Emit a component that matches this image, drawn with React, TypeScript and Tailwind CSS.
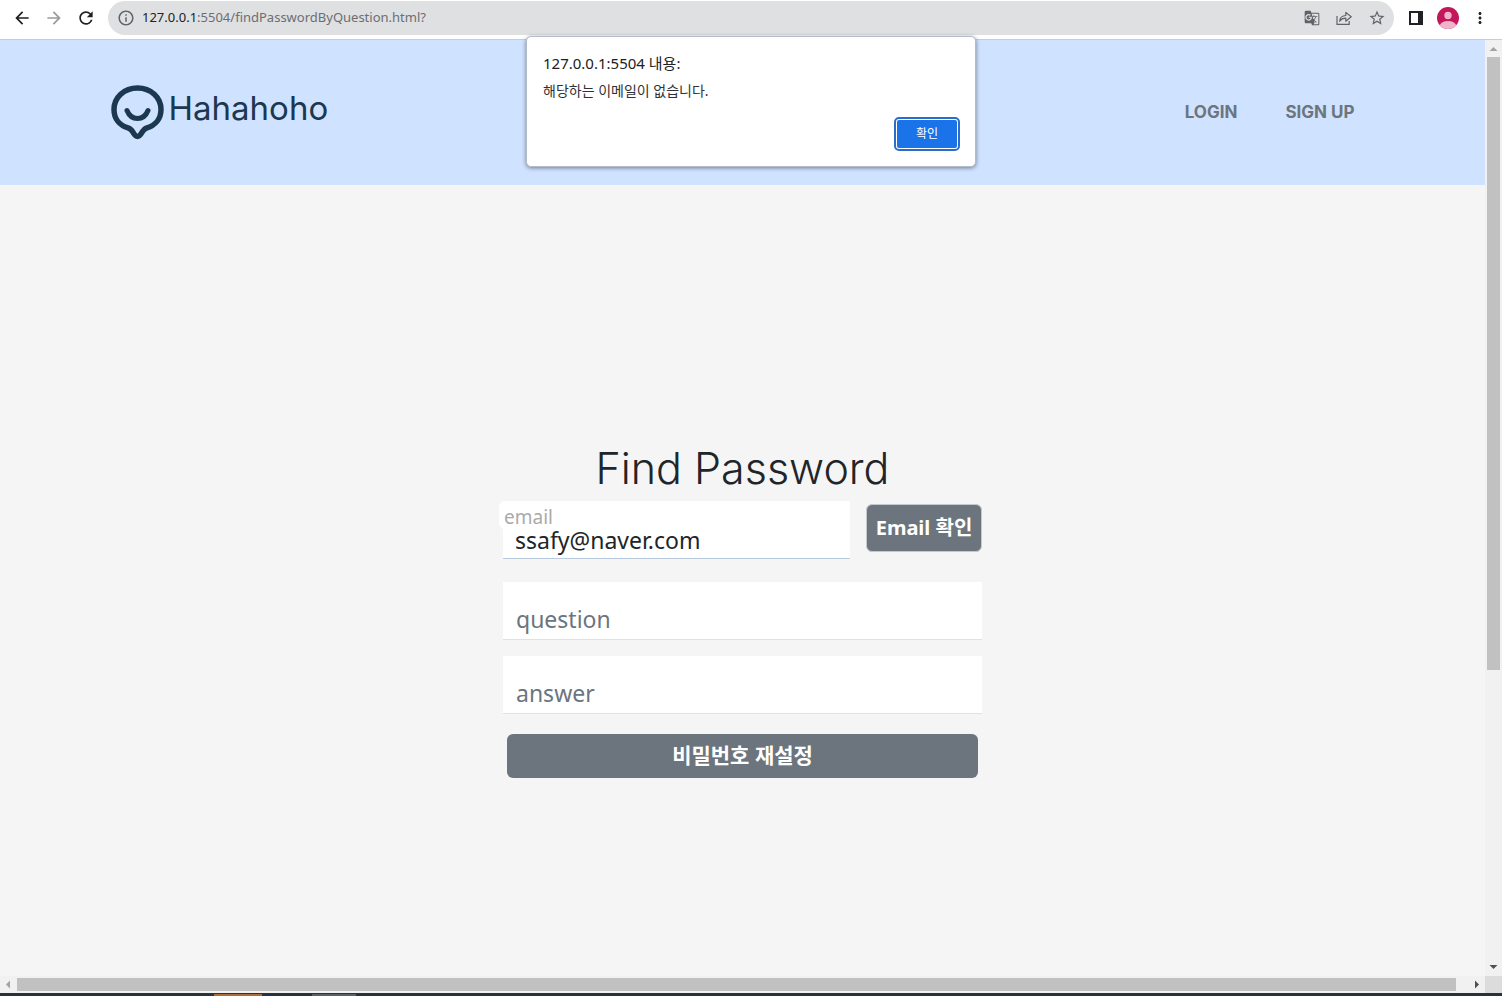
import { useState } from "react";
import {
  MdArrowBack,
  MdArrowForward,
  MdGTranslate,
  MdInfoOutline,
  MdMoreVert,
  MdRefresh,
  MdStarBorder,
} from "react-icons/md";

const ui = "font-['Noto_Sans','Noto_Sans_CJK_KR',sans-serif]";

function BrowserBar() {
  return (
    <div className="flex h-10 shrink-0 items-start border-b border-[#c9cdd3] bg-white pr-[13px] pl-3">
      <div className="flex h-9 items-center gap-3 text-[#1f2023]">
        <button type="button" aria-label="Back"><MdArrowBack size={20} /></button>
        <button type="button" aria-label="Forward" className="text-[#9a9a9c]"><MdArrowForward size={20} /></button>
        <button type="button" aria-label="Reload"><MdRefresh size={20} /></button>
      </div>
      <div className="mt-px ml-3 flex h-[34px] flex-1 items-center rounded-full bg-[#dfe0e2] px-2 text-[#5f6368]">
        <MdInfoOutline size={18} className="ml-px" />
        <p className="ml-[7px] flex-1 text-[13px] text-[#6b6e72]">
          <span className="text-[#202124]">127.0.0.1</span>:5504/findPasswordByQuestion.html?
        </p>
        <div className="flex items-center gap-4">
          <button type="button" aria-label="Translate this page"><MdGTranslate size={16} /></button>
          <button type="button" aria-label="Share">
            <svg width="16" height="16" viewBox="0 0 16 16" fill="none" stroke="currentColor" strokeWidth="1.2">
              <path d="M1 6v8.4h12.2V11" />
              <path d="M3.6 11.2C4 7.6 6.400 5.600 9.800 5.500V2.400L15.200 6.800 9.800 11.200V8.200C7 8.200 5.200 9 3.600 11.200Z" strokeLinejoin="round" />
            </svg>
          </button>
          <button type="button" aria-label="Bookmark"><MdStarBorder size={18} /></button>
        </div>
      </div>
      <div className="ml-[11px] flex h-9 items-center gap-3">
        <button type="button" aria-label="Side panel" className="ml-0.5">
          <svg width="18" height="18" viewBox="0 0 18 18">
            <path fill="#202124" fillRule="evenodd" d="M2 2h14v14H2zM4 4v10h7V4z" />
          </svg>
        </button>
        <button type="button" aria-label="Profile">
          <svg width="22" height="22" viewBox="0 0 22 22">
            <defs><clipPath id="avatar"><circle cx="11" cy="11" r="11" /></clipPath></defs>
            <g clipPath="url(#avatar)">
              <path fill="#c2185b" d="M0 0h22v22H0z" />
              <circle cx="11" cy="8.500" r="3.700" fill="#eeb4ca" />
              <ellipse cx="11" cy="19" rx="8.200" ry="5" fill="#eeb4ca" />
            </g>
          </svg>
        </button>
        <button type="button" aria-label="Menu" className="text-[#202124]"><MdMoreVert size={18} /></button>
      </div>
    </div>
  );
}

function AlertDialog() {
  return (
    <div
      role="alertdialog"
      aria-labelledby="alert-title"
      aria-describedby="alert-text"
      className="absolute top-9 left-1/2 flex w-[450px] -translate-x-1/2 flex-col rounded-[5px] border border-[#b4bccb] bg-white pt-4 pr-[15px] pb-[15px] pl-4 shadow-[0_1px_4px_rgba(0,0,0,0.45)]"
    >
      <h2 id="alert-title" className="text-[15px] leading-5 text-[#202124]">127.0.0.1:5504 내용:</h2>
      <p id="alert-text" className="mt-1.5 text-sm leading-6 text-[#303134]">해당하는 이메일이 없습니다.</p>
      <button
        type="button"
        className="mt-3.5 flex h-[34px] w-[66px] items-center justify-center self-end rounded-[5px] border-2 border-[#2b6dca] bg-white p-px text-xs text-white"
      >
        <span className="flex h-full w-full items-center justify-center rounded-[2px] bg-[#1a73e8]">확인</span>
      </button>
    </div>
  );
}

function Logo() {
  return (
    <a href="#home" className="flex items-start gap-1 text-[#1c3850]">
      <svg width="54" height="56" viewBox="0 0 54 56" fill="none" stroke="currentColor" strokeLinecap="round" strokeLinejoin="round">
        <path strokeWidth="5.500" d="M26.500 3C13 3 3 12.500 3 24.500c0 9.500 5.800 16 14 18.300 2.800.9 3.600 2.200 4.900 4.400 1.300 2.300 2.500 4.300 4.600 4.300s3.300-2 4.600-4.300c1.300-2.200 2.100-3.500 4.900-4.400 8-2.300 14-8.800 14-18.300C50 12.500 40 3 26.500 3Z" />
        <path strokeWidth="5" d="M16 25.500c2 5 6 8 10.500 8s8.500-3 10.500-8" />
      </svg>
      <span className="font-['Inter',sans-serif] text-[33px] leading-[46px]">Hahahoho</span>
    </a>
  );
}

function SiteHeader() {
  return (
    <header className="bg-[#cfe2ff]">
      <div className="mx-auto flex h-[145px] max-w-[1320px] items-center justify-between pr-12 pl-7">
        <Logo />
        <nav className="flex gap-12 pb-0.5 font-['Inter',sans-serif] text-[17px] leading-6 font-bold text-[#6c757d]">
          <a href="#login">LOGIN</a>
          <a href="#signup">SIGN UP</a>
        </nav>
      </div>
    </header>
  );
}

const field =
  "block h-[58px] w-full border-b border-[#dee2e6] bg-white px-[13px] pt-4 text-[23px] text-[#212529] outline-none placeholder:text-[#6c757d]";

function FindPasswordForm() {
  const [email, setEmail] = useState("ssafy@naver.com");
  return (
    <form className="mx-auto w-full max-w-[479px]" onSubmit={(e) => e.preventDefault()}>
      <h1 className="text-center font-['Inter',sans-serif] text-[43px] leading-[48px] font-light text-[#212529]">
        Find Password
      </h1>
      <div className="mt-[9px] flex items-start gap-4">
        <div className="relative flex-1">
          <input
            id="email"
            type="text"
            value={email}
            onChange={(e) => setEmail(e.target.value)}
            className="block h-[58px] w-full border-b border-[#b9cbe0] bg-white px-3 pt-5 text-[23px] text-[#212529] outline-none"
          />
          <label htmlFor="email" className="absolute top-0 -left-1 h-7 rounded-md bg-white px-[5px] text-[19px] leading-8 text-[#aaaaaa]">
            email
          </label>
        </div>
        <button type="button" className="mt-[3px] h-12 w-[116px] rounded-md border border-[#c5cace] bg-[#6c757d] text-xl font-bold whitespace-nowrap text-white">
          Email 확인
        </button>
      </div>
      <input aria-label="question" placeholder="question" className={field + " mt-[23px]"} />
      <input aria-label="answer" placeholder="answer" className={field + " mt-4"} />
      <div className="mt-5 px-1">
        <button type="submit" className="h-11 w-full rounded-md bg-[#6c757d] text-[21px] font-bold text-white">
          비밀번호 재설정
        </button>
      </div>
    </form>
  );
}

function VerticalScrollbar() {
  return (
    <div aria-hidden="true" className="flex w-[17px] shrink-0 flex-col items-center bg-[#f1f1f1]">
      <svg width="17" height="17" viewBox="0 0 17 17"><path fill="#a3a3a3" d="M4.500 11 8.500 7l4 4z" /></svg>
      <div className="w-[13px] grow-[613] bg-[#c1c1c1]" />
      <div className="grow-[289]" />
      <svg width="17" height="17" viewBox="0 0 17 17"><path fill="#505050" d="M4.500 6l4 4 4-4z" /></svg>
    </div>
  );
}

function HorizontalScrollbar() {
  return (
    <div aria-hidden="true" className="flex h-[17px] shrink-0 items-center bg-[#f1f1f1]">
      <svg width="17" height="17" viewBox="0 0 17 17"><path fill="#a3a3a3" d="M10 4.500 6 8.500l4 4z" /></svg>
      <div className="h-[13px] flex-1 bg-[#c1c1c1]" />
      <div className="w-3" />
      <svg width="17" height="17" viewBox="0 0 17 17"><path fill="#505050" d="M7 4.500l4 4-4 4z" /></svg>
      <div className="h-full w-[17px] bg-[#dcdcdc]" />
    </div>
  );
}

export default function App() {
  return (
    <div className={"relative flex min-h-screen flex-col " + ui}>
      <BrowserBar />
      <div className="flex flex-1">
        <div className="min-w-0 flex-1 bg-[#f5f5f5]">
          <SiteHeader />
          <main className="pt-[259px] pb-16">
            <FindPasswordForm />
          </main>
        </div>
        <VerticalScrollbar />
      </div>
      <HorizontalScrollbar />
      <div className="flex h-[3px] shrink-0 items-end bg-[#29323c]">
        <div className="ml-[214px] h-0.5 w-12 bg-[#a96c3c]" />
        <div className="ml-[50px] h-0.5 w-11 bg-[#596167]" />
      </div>
      <AlertDialog />
    </div>
  );
}
